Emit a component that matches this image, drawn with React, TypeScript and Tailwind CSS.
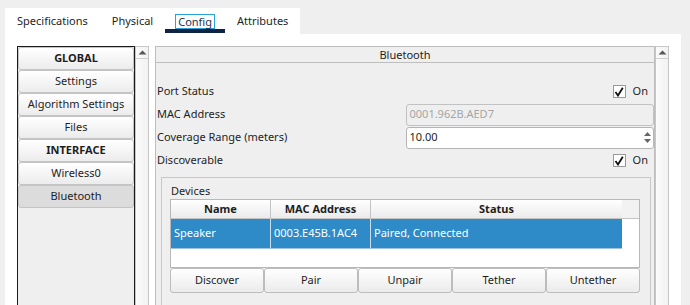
import React from "react";

const tabs = ["Specifications", "Physical", "Config", "Attributes"];
const menu = [
  { label: "GLOBAL", bold: true },
  { label: "Settings" },
  { label: "Algorithm Settings" },
  { label: "Files" },
  { label: "INTERFACE", bold: true },
  { label: "Wireless0" },
  { label: "Bluetooth", active: true },
];
const actions = ["Discover", "Pair", "Unpair", "Tether", "Untether"];

function UpArrow() {
  return (
    <svg width="9" height="5" viewBox="0 0 9 5">
      <path d="M0.5 4.5 L4.5 0.5 L8.5 4.5 Z" fill="#555" />
    </svg>
  );
}

function ScrollBar() {
  return (
    <div className="w-[14px] h-full border border-[#c6c6c6] bg-gradient-to-r from-[#fbfbfb] to-[#f2f2f2] flex flex-col">
      <div className="h-[12px] border-b border-[#cfcfcf] flex items-center justify-center">
        <UpArrow />
      </div>
    </div>
  );
}

function CheckOn() {
  return (
    <div className="flex items-center gap-[7px] pr-[6px]">
      <div className="w-[13px] h-[13px] bg-white border border-[#9a9a9a] flex items-center justify-center">
        <svg width="10" height="10" viewBox="0 0 10 10">
          <path d="M1.5 5 L4 8.5 L8.8 0.8" stroke="#111" strokeWidth="1.8" fill="none" />
        </svg>
      </div>
      <span>On</span>
    </div>
  );
}

export default function App() {
  return (
    <div
      className="w-[690px] h-[305px] overflow-hidden bg-[#efefef] text-[11px] text-[#1e1e1e] flex flex-col"
      style={{ fontFamily: '"Noto Sans", "Open Sans", sans-serif' }}
    >
      {/* Tab bar */}
      <div className="pl-[5px] pt-[8px] flex">
        <div className="bg-white h-[26px] flex">
          {tabs.map((t) =>
            t === "Config" ? (
              <div key={t} className="relative px-[10px] flex items-center">
                <span className="px-[2px] leading-[13px] border border-[#2aa3d8] text-[#1d3456]">{t}</span>
                <div className="absolute left-0 right-0 bottom-[1px] h-[4px] bg-[#0f2444]" />
              </div>
            ) : (
              <div key={t} className="px-[12px] flex items-center">
                {t}
              </div>
            )
          )}
        </div>
      </div>

      {/* Main area */}
      <div className="ml-[5px] w-[676px] flex-1 bg-white flex pt-[12px] pl-[12px]">
        {/* Left navigation list */}
        <div className="w-[118px] h-[300px] border border-[#1a1a1a] bg-[#efefef] flex flex-col">
          {menu.map((m) => (
            <div
              key={m.label}
              className={
                "h-[23px] rounded-[3px] border border-[#c4c4c4] flex items-center justify-center " +
                (m.active ? "bg-[#dcdcdc]" : "bg-gradient-to-b from-white to-[#ececec]") +
                (m.bold ? " font-bold" : "")
              }
            >
              {m.label}
            </div>
          ))}
        </div>
        <ScrollBar />

        {/* Right configuration panel */}
        <div className="ml-[6px] w-[500px] h-[300px] border border-[#bdbdbd] bg-[#efefef] flex flex-col">
          <div className="h-[16px] border-b border-[#bdbdbd] flex items-center justify-center leading-none">
            Bluetooth
          </div>
          <div className="pt-[17px] flex flex-col">
            <div className="h-[23px] flex items-center justify-between pl-[1px]">
              <span>Port Status</span>
              <CheckOn />
            </div>
            <div className="h-[23px] flex items-center pl-[1px]">
              <span className="w-[249px]">MAC Address</span>
              <div className="w-[249px] h-[22px] rounded-[3px] border border-[#c2c2c2] bg-[#efefef] text-[#a6a6a6] flex items-center pl-[3px]">
                0001.962B.AED7
              </div>
            </div>
            <div className="h-[23px] flex items-center pl-[1px]">
              <span className="w-[249px]">Coverage Range (meters)</span>
              <div className="w-[249px] h-[22px] rounded-[3px] border border-[#b5b5b5] bg-white flex items-center">
                <span className="flex-1 pl-[3px]">10.00</span>
                <div className="w-[12px] h-full flex flex-col items-center justify-center gap-[3px]">
                  <svg width="7" height="4" viewBox="0 0 7 4">
                    <path d="M0 4 L3.5 0 L7 4 Z" fill="#666" />
                  </svg>
                  <svg width="7" height="4" viewBox="0 0 7 4">
                    <path d="M0 0 L3.5 4 L7 0 Z" fill="#666" />
                  </svg>
                </div>
              </div>
            </div>
            <div className="h-[23px] flex items-center justify-between pl-[1px]">
              <span>Discoverable</span>
              <CheckOn />
            </div>

            {/* Devices group */}
            <div className="mt-[5px] ml-[5px] mr-[3px] h-[140px] border border-[#c8c8c8] pl-[8px] pr-[10px]">
              <div className="h-[21px] flex items-end pl-[1px] pb-[3px] leading-none">Devices</div>
              <div className="border border-[#b8b8b8] bg-white">
                <div className="h-[19px] flex border-b border-[#c4c4c4] font-bold">
                  <div className="w-[100px] border-r border-[#c4c4c4] bg-gradient-to-b from-white to-[#ebebeb] flex items-center justify-center">Name</div>
                  <div className="w-[100px] border-r border-[#c4c4c4] bg-gradient-to-b from-white to-[#ebebeb] flex items-center justify-center">MAC Address</div>
                  <div className="w-[251px] bg-gradient-to-b from-white to-[#ebebeb] flex items-center justify-center">Status</div>
                  <div className="flex-1 bg-[#f2f2f2]" />
                </div>
                <div className="h-[30px] flex">
                  <div className="w-[451px] flex bg-[#2e8bc8] text-white border-b border-[#9fc4e0]">
                    <div className="w-[100px] border-r border-[#c8dcec] flex items-center pl-[3px]">Speaker</div>
                    <div className="w-[100px] border-r border-[#c8dcec] flex items-center pl-[3px]">0003.E45B.1AC4</div>
                    <div className="flex-1 flex items-center pl-[3px]">Paired, Connected</div>
                  </div>
                </div>
                <div className="h-[18px]" />
              </div>
              <div className="flex h-[25px]">
                {actions.map((a) => (
                  <div
                    key={a}
                    className="flex-1 rounded-[3px] border border-[#bdbdbd] bg-gradient-to-b from-white to-[#ebebeb] flex items-center justify-center"
                  >
                    {a}
                  </div>
                ))}
              </div>
            </div>
          </div>
        </div>
        <ScrollBar />
      </div>
    </div>
  );
}
